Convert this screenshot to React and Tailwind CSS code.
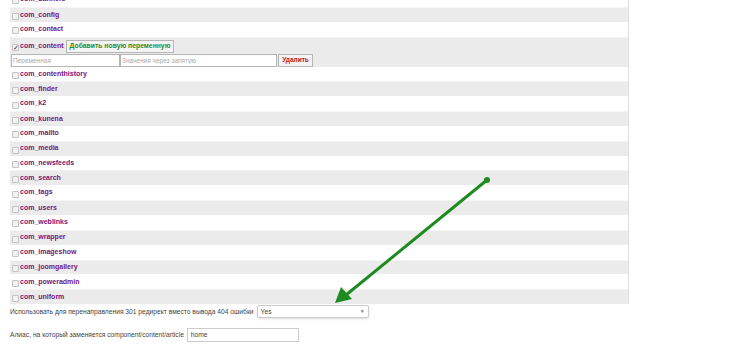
import React from "react";

const top = ["com_banners", "com_config", "com_contact"];
const rest = [
  "com_contenthistory",
  "com_finder",
  "com_k2",
  "com_kunena",
  "com_mailto",
  "com_media",
  "com_newsfeeds",
  "com_search",
  "com_tags",
  "com_users",
  "com_weblinks",
  "com_wrapper",
  "com_imageshow",
  "com_joomgallery",
  "com_poweradmin",
  "com_uniform",
];

function Box({ checked }) {
  return (
    <span className="inline-flex items-center justify-center w-[7px] h-[7px] mt-[3px] ml-[1px] mr-[1px] border border-[#c4c4c4] bg-[#f2f2f2] rounded-[1px] text-[7px] leading-none text-[#333]">
      {checked ? "✓" : ""}
    </span>
  );
}

function Row({ name, gray }) {
  return (
    <div
      className={
        "h-[14.85px] flex items-center pl-[1px] " +
        (gray ? "bg-[#ebebeb] border-t border-[#f4f4f4]" : "bg-white")
      }
    >
      <Box />
      <span className="text-[7px] font-bold text-[#76167a]">{name}</span>
    </div>
  );
}

export default function App() {
  return (
    <div
      className="relative w-[750px] h-[348px] overflow-hidden bg-white text-[#333]"
      style={{ fontFamily: '"Liberation Sans", Arial, sans-serif' }}
    >
      <div className="ml-[10px] w-[619px] -mt-[8px] border-r border-[#e2e2e2]">
        {top.map((n, i) => (
          <Row key={n} name={n} gray={i % 2 === 1} />
        ))}
        <div className="bg-[#ebebeb] h-[30px] pl-[1px] pt-[2px] border-t border-[#f4f4f4]">
          <div className="flex items-center h-[13px]">
            <Box checked />
            <span className="text-[7px] font-bold text-[#76167a]">com_content</span>
            <button className="ml-[2px] h-[13px] px-[3px] border border-[#b5b5b5] bg-[#f4f4f4] text-[6.8px] font-bold leading-none text-[#2a8a2a]">
              Добавить новую переменную
            </button>
          </div>
          <div className="flex mt-[1px] h-[13px]">
            <input
              placeholder="Переменная"
              className="w-[109px] h-[13px] border border-[#b5b5b5] bg-white px-[1px] text-[6.5px] placeholder:text-[#aaa] outline-none"
            />
            <input
              placeholder="Значения через запятую"
              className="w-[157px] h-[13px] border border-[#b5b5b5] bg-white px-[1px] text-[6.5px] placeholder:text-[#aaa] outline-none"
            />
            <button className="ml-[1px] w-[35px] h-[13px] border border-[#b5b5b5] bg-[#f4f4f4] text-[6.5px] font-bold leading-none text-[#c0161f]">
              Удалить
            </button>
          </div>
        </div>
        {rest.map((n, i) => (
          <Row key={n} name={n} gray={i % 2 === 1} />
        ))}
      </div>

      <div className="ml-[10px] mt-[1px] flex items-center h-[13px] text-[6.7px] text-[#444]">
        <span>Использовать для перенаправления 301 редирект вместо вывода 404 ошибки</span>
        <div className="ml-[3px] w-[112px] h-[13px] flex items-center justify-between px-[3px] border border-[#ccc] rounded-[2px] bg-white shadow-sm">
          <span>Yes</span>
          <span className="text-[5px] text-[#777]">▼</span>
        </div>
      </div>

      <div className="ml-[10px] mt-[10px] flex items-center h-[14px] text-[6.7px] text-[#444]">
        <span>Алиас, на который заменяется component/content/article</span>
        <div className="ml-[3px] w-[112px] h-[14px] flex items-center px-[3px] border border-[#ccc] bg-white">
          home
        </div>
      </div>

      <svg
        className="absolute left-0 top-0 pointer-events-none"
        width="750"
        height="348"
      >
        <line x1="487" y1="180" x2="346" y2="295" stroke="#1f8a1f" strokeWidth="3" strokeLinecap="round" />
        <circle cx="487" cy="180" r="3" fill="#1f8a1f" />
        <polygon points="335,303 341,287 352,299" fill="#1f8a1f" />
      </svg>
    </div>
  );
}
